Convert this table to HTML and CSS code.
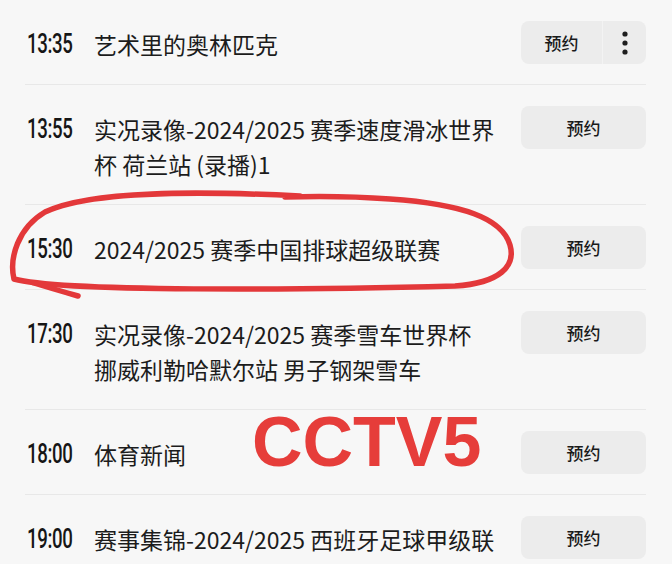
FILE: index.html
```html
<!DOCTYPE html>
<html lang="zh-CN">
<head>
<meta charset="utf-8">
<title>节目单</title>
<link rel="stylesheet" href="styles.css">
</head>
<body>
<div class="page">
  <ul class="list">
    <li class="row">
      <div class="time"><span>13:35</span></div>
      <div class="title">艺术里的奥林匹克</div>
      <div class="actions">
        <button class="btn btn-half">预约</button>
        <button class="btn-more" aria-label="更多">
          <svg width="8" height="24" viewBox="0 0 8 24"><circle cx="4" cy="3" r="2.6"/><circle cx="4" cy="12" r="2.6"/><circle cx="4" cy="21" r="2.6"/></svg>
        </button>
      </div>
    </li>
    <li class="row">
      <div class="time"><span>13:55</span></div>
      <div class="title">实况录像-2024/2025 赛季速度滑冰世界<br>杯 荷兰站 (录播)1</div>
      <div class="actions"><button class="btn">预约</button></div>
    </li>
    <li class="row">
      <div class="time"><span>15:30</span></div>
      <div class="title">2024/2025 赛季中国排球超级联赛</div>
      <div class="actions"><button class="btn">预约</button></div>
    </li>
    <li class="row">
      <div class="time"><span>17:30</span></div>
      <div class="title">实况录像-2024/2025 赛季雪车世界杯<br>挪威利勒哈默尔站 男子钢架雪车</div>
      <div class="actions"><button class="btn">预约</button></div>
    </li>
    <li class="row">
      <div class="time"><span>18:00</span></div>
      <div class="title">体育新闻</div>
      <div class="actions"><button class="btn">预约</button></div>
    </li>
    <li class="row">
      <div class="time"><span>19:00</span></div>
      <div class="title">赛事集锦-2024/2025 西班牙足球甲级联</div>
      <div class="actions"><button class="btn">预约</button></div>
    </li>
  </ul>

  <svg class="mark" width="672" height="564" viewBox="0 0 672 564">
    <path d="M300 196 C 200 191, 90 190, 45 212 C 18 228, 9 258, 14 279 C 60 292, 300 290, 455 286 C 500 283, 516 266, 510 245 C 502 218, 462 204, 390 199 C 350 196, 320 196, 285 197"/>
    <path d="M34 283 C 50 288, 64 292, 78 296"/>
  </svg>
  <div class="stamp">CCTV5</div>
</div>
</body>
</html>
```
FILE: styles.css
```css
* { box-sizing: border-box; }
html, body { margin: 0; padding: 0; }
body {
  background: #f7f7f7;
  font-family: "Noto Sans CJK SC", "Noto Sans", sans-serif;
  color: #1c1c1c;
  width: 672px;
  height: 564px;
  overflow: hidden;
}
.page { position: relative; width: 672px; height: 564px; }
.list {
  list-style: none;
  margin: 0;
  padding: 0 26px 0 25px;
}
.row {
  display: flex;
  align-items: flex-start;
  padding-top: 21px;
  border-bottom: 1px solid #e8e8e8;
}
.time {
  flex: 0 0 69px;
  padding: 6px 0 0 2px;
  line-height: 35px;
  font-family: "Roboto", "Liberation Sans", sans-serif;
  font-weight: 500;
  font-size: 27px;
  color: #161616;
}
.time span {
  display: inline-block;
  transform: scaleX(0.69);
  transform-origin: left center;
  letter-spacing: -0.5px;
}
.title {
  flex: 1;
  min-width: 0;
  white-space: nowrap;
  padding: 6px 0 22px;
  line-height: 35px;
  font-size: 23px;
  color: #1c1c1c;
}
.actions {
  flex: 0 0 125px;
  display: flex;
  height: 43px;
  border-radius: 8px;
  overflow: hidden;
  background: #ececec;
}
.btn {
  flex: 1;
  border: 0;
  background: transparent;
  font-family: "Noto Sans CJK SC", sans-serif;
  font-size: 17px;
  font-weight: 500;
  color: #1a1a1a;
  padding: 0;
}
.btn-half { flex: 0 0 82px; border-right: 1px solid #f3f3f3; }
.btn-more {
  flex: 1;
  border: 0;
  background: transparent;
  display: flex;
  align-items: center;
  justify-content: center;
  padding: 0;
}
.btn-more svg { fill: #1e1e1e; }
.mark {
  position: absolute;
  left: 0;
  top: 0;
  pointer-events: none;
  fill: none;
  stroke: #e3383a;
  stroke-width: 5.5;
  stroke-linecap: round;
  stroke-linejoin: round;
}
.stamp {
  position: absolute;
  left: 252px;
  top: 399px;
  font-family: "Liberation Sans", Arial, sans-serif;
  font-weight: 700;
  font-size: 70px;
  line-height: 86px;
  color: #e63d3a;
}
```
